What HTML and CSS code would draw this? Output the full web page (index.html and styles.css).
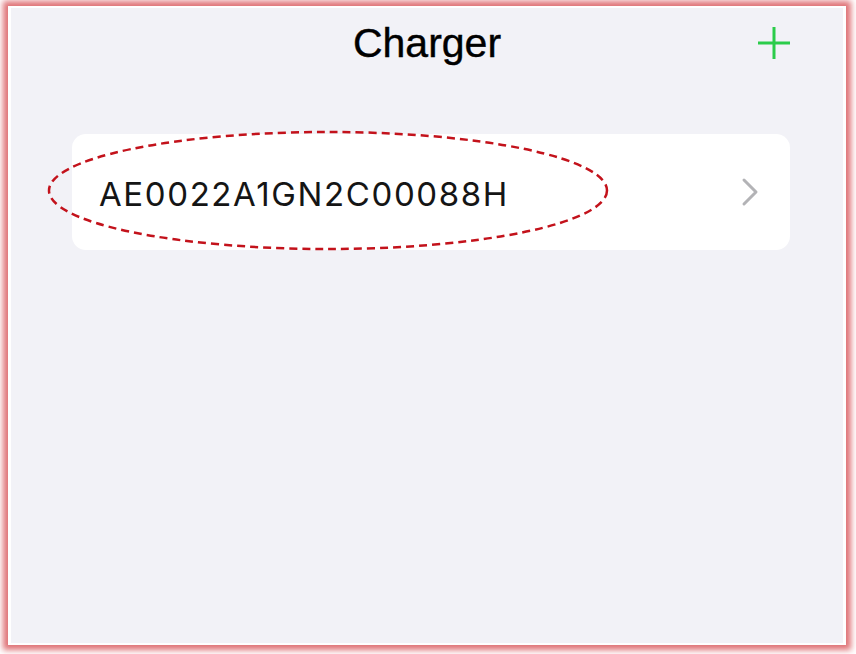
FILE: index.html
```html
<!DOCTYPE html>
<html lang="en">
<head>
    <meta charset="UTF-8">
    <meta name="viewport" content="width=device-width, initial-scale=1.0">
    <title>Charger</title>
    <link rel="stylesheet" href="styles.css">
</head>
<body>
    <div class="frame">
        <div class="screen">
            <!-- Top bar -->
            <div class="header">
                <h1 class="title">Charger</h1>
                <button class="add-btn" aria-label="Add charger">
                    <svg width="34" height="34" viewBox="0 0 34 34">
                        <path d="M17 1 V33 M1 17 H33" stroke="#2bcc4a" stroke-width="3" fill="none"/>
                    </svg>
                </button>
            </div>

            <!-- Charger list -->
            <div class="charger-list">
                <div class="charger-item">
                    <span class="charger-id">AE0022A1GN2C00088H</span>
                    <svg class="chevron" width="18" height="30" viewBox="0 0 18 30">
                        <path d="M3 3 L15 15 L3 27" stroke="#b3b3b6" stroke-width="3" fill="none" stroke-linecap="round" stroke-linejoin="round"/>
                    </svg>
                </div>
            </div>
        </div>

        <!-- annotation mark -->
        <svg class="mark" width="562" height="121" viewBox="0 0 562 121">
            <ellipse cx="281" cy="60.5" rx="279" ry="58.5" fill="none" stroke="#c3121b" stroke-width="2.5" stroke-dasharray="8 5"/>
        </svg>
    </div>
</body>
</html>
```

FILE: styles.css
```css
body {
    margin: 0;
    background-color: #fff;
    font-family: "Liberation Sans", Arial, sans-serif;
}

.frame {
    position: relative;
    box-sizing: border-box;
    width: 838px;
    height: 639px;
    margin: 6px 10px 9px 8px;
    border: 3px solid #fff;
    border-top-width: 2px;
    border-bottom-width: 2px;
    box-shadow: 0 0 6px 5px rgba(220, 100, 104, 0.9);
}

.screen {
    height: 100%;
    background-color: #f2f2f7;
}

.header {
    position: relative;
    height: 70px;
    display: flex;
    align-items: center;
    justify-content: center;
}

.title {
    margin: 0;
    font-size: 41px;
    font-weight: normal;
    color: #000;
    -webkit-text-stroke: 0.4px #000;
}

.add-btn {
    position: absolute;
    right: 52px;
    top: 18px;
    padding: 0;
    border: none;
    background: none;
    display: flex;
}

.charger-list {
    padding: 56px 53px 0 61px;
}

.charger-item {
    height: 116px;
    display: flex;
    align-items: center;
    justify-content: space-between;
    padding: 0 31px 0 27px;
    background-color: #fff;
    border-radius: 14px;
}

.charger-id {
    font-family: "Inter", sans-serif;
    font-size: 33px;
    letter-spacing: 1.6px;
    color: #151515;
    margin-top: 4px;
}

.chevron {
    display: block;
}

.mark {
    position: absolute;
    left: 36px;
    top: 122px;
}
```
